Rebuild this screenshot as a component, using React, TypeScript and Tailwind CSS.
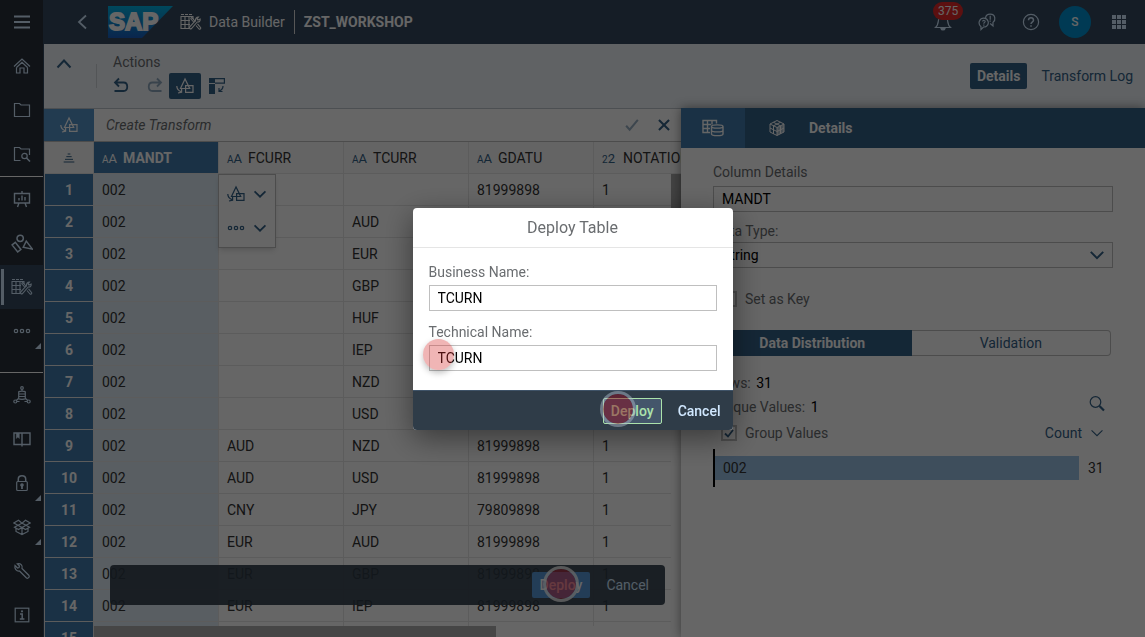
import React from "react";

type IconProps = { className?: string };

function Svg({ className = "", size = 18, children }: { className?: string; size?: number; children: React.ReactNode }) {
  return (
    <svg
      className={`shrink-0 ${className}`}
      width={size}
      height={size}
      viewBox="0 0 18 18"
      fill="none"
      stroke="currentColor"
      strokeWidth={1.2}
      aria-hidden="true"
    >
      {children}
    </svg>
  );
}

const MenuIcon = () => (
  <Svg>
    <path d="M1 3.500h16M1 9h16M1 14.500h16" strokeWidth={2} />
  </Svg>
);
const HomeIcon = () => (
  <Svg>
    <path d="M1 9.500 9 2l8 7.500M3.500 10.500V16h3.500v-5h4v5h3.500v-5.500M3.500 10.500 9 5.300l5.500 5.200" />
  </Svg>
);
const FolderIcon = () => (
  <Svg>
    <path d="M1.500 15.500v-13h5l1.500 1.500h8.500v11.500z" />
  </Svg>
);
const FolderSearchIcon = () => (
  <Svg>
    <path d="M7.500 15.500h-6v-13h5L8 4h8.500v6" />
    <circle cx="11.500" cy="11" r="2.700" />
    <path d="m13.500 13 3.500 3.500" strokeWidth={1.600} />
  </Svg>
);
const PresentationIcon = () => (
  <Svg>
    <path d="M1.500 3.500h15v9.500h-15zM9 1v2.500M6 10.500V8M9 10.500v-5M12 10.500V7M6 13l-1.500 4M12 13l1.500 4" strokeWidth={1.400} />
  </Svg>
);
const ShapesIcon = () => (
  <Svg size={22}>
    <circle cx="7.500" cy="5.200" r="2.600" />
    <path d="M3.500 8.500.9 10.500l4.600 5.800 2.600-2zM12.500 7.500l-2.500 5 7.500 1.500z" />
  </Svg>
);
const TableToolsIcon = ({ className }: IconProps) => (
  <svg className={`shrink-0 ${className ?? ""}`} width="22" height="18" viewBox="0 0 22 18" fill="none" stroke="currentColor" strokeWidth={1.100} aria-hidden="true">
    <path d="M1 1.500h12" strokeDasharray="3 1" />
    <path d="M9.500 15.500H1v-12h12.500M1 7.500h9M1 11.500h9M5 3.500v12M9 3.500v12M13 3.500v2.500" />
    <path d="m10.500 5.500 1.300-1 3.600 4.200M10.500 5.500l3.600 4M16 12.500l3 3.500M17.500 10.800l3.200 3.900c.4 1-1 2-1.700 1.300" />
    <path d="m18.500 4-1.500 2 1 1 2.200-1c.2 2.300-1.200 3.300-3 3l-5.700 6.500c-1.200 1-2.700-.4-1.700-1.600l5.700-6.200C15 5.500 16.500 4 18.500 4z" />
  </svg>
);
const DotsIcon = () => (
  <Svg>
    <circle cx="3" cy="9" r="1.700" />
    <circle cx="9" cy="9" r="1.700" />
    <circle cx="15" cy="9" r="1.700" />
  </Svg>
);
const DataNetworkIcon = () => (
  <Svg>
    <circle cx="9" cy="2" r="1.300" />
    <circle cx="2.300" cy="15.500" r="1.500" />
    <circle cx="15.700" cy="15.500" r="1.500" />
    <path d="M9 3.500V5M5.700 5.800c1-.8 5.600-.8 6.600 0v7c-1 .8-5.600.8-6.600 0zM5.700 8h6.600M5.700 10.500h6.600M5.500 12.500l-2 1.700M12.500 12.500l2 1.700M4 15.500h2.500M11.500 15.500H14" />
  </Svg>
);
const BookIcon = () => (
  <Svg>
    <path d="M1 3h16v11.500H1zM9 3v13.500" strokeWidth={1.400} />
    <path d="M3.300 3v5.500L4.800 7l1.500 1.500V3" fill="currentColor" strokeWidth={0.500} />
  </Svg>
);
const LockIcon = () => (
  <Svg>
    <rect x="3.700" y="7.500" width="10.600" height="9" rx="1" />
    <path d="M5.300 7.500V5c0-4.500 7.400-4.500 7.400 0v2.500" strokeWidth={1.500} />
    <circle cx="9" cy="11" r="1.200" fill="currentColor" />
    <path d="M9 11v4" strokeWidth={1.800} />
  </Svg>
);
const BoxIcon = () => (
  <Svg>
    <path d="M9 5.200 5 7.300 9 9.500l4-2.200zM3 9.500v4l6 3 6-3v-4M9 9.500v7M5 7.300.8 5 5.500 2.200 9 5.200l3.500-3L17.200 5 13 7.300l3.500 2-4 2.200L9 9.500l-3.500 2-4-2.200z" />
  </Svg>
);
const WrenchIcon = () => (
  <Svg>
    <path d="M2 3.500 4.500 6 6 5.500 6.500 4 4.200 1.800C7.500.8 10 3.500 9 6.500l7 7c1 1.500-1 3.500-2.500 2.500l-7-7C3.500 9.500 1.200 6.500 2 3.500z" />
  </Svg>
);
const InfoIcon = () => (
  <Svg>
    <rect x="2.200" y="2.200" width="13.600" height="13.600" />
    <path d="M7 8h2.200v5M6.800 13h4.600" strokeWidth={1.500} />
    <circle cx="9" cy="5.300" r="1.100" fill="currentColor" stroke="none" />
  </Svg>
);
const ChevronLeft = () => (
  <Svg>
    <path d="m13 2.500-7 6.500 7 6.500" strokeWidth={1.800} />
  </Svg>
);
const ChevronUp = () => (
  <Svg>
    <path d="m2.500 12.500 6.500-7 6.500 7" strokeWidth={2} />
  </Svg>
);
const ChevronDown = ({ className, thin = false, size = 14 }: { className?: string; thin?: boolean; size?: number }) => (
  <Svg className={className} size={size}>
    <path d="m2 5.500 7 7 7-7" strokeWidth={thin ? 1.400 : 2.200} />
  </Svg>
);
const UndoIcon = ({ className }: IconProps) => (
  <Svg className={className}>
    <path d="M6 1.500 2 5.500l4 4M2 5.500h8.500c5 0 5 8.500 0 8.500H1.500" strokeWidth={1.800} />
  </Svg>
);
const TransformIcon = ({ className }: IconProps) => (
  <Svg className={className}>
    <path d="M9 2 4.500 11.500h9.200z" />
    <path d="M9.600 8.600h7.400v6.800H9.600z" />
    <path d="M.8 9c0 2.800 1 4.300 4.200 5.600M5.600 11.500v3.700l-3.600.8" />
  </Svg>
);
const PivotIcon = () => (
  <Svg>
    <path d="M1 1h6v5H1zM1 7h6v10H1z" fill="currentColor" stroke="none" />
    <path d="M7 1.600h9.400v4.600H7M15 9c0 2.500-1 4-4 5M11 11v3.500h3.500" />
  </Svg>
);
const BellIcon = () => (
  <Svg>
    <path d="M1.500 14.500h15C14 12.500 14 11 13.500 7c-.5-6-8.500-6-9 0-.5 4-.5 5.500-3 7.500z" />
    <path d="M7 15.500c.5 2 3.500 2 4 0z" fill="currentColor" />
  </Svg>
);
const ChatHelpIcon = () => (
  <Svg>
    <path d="M3 16.500v-2.800C-1 10 2 5 6 5.200s6 5.300 2.500 8c-1.200.9-2 .8-3 .8z" />
    <path d="M7.500 4.800c1-5 8.500-4.600 9.300 0 .4 2.200-.6 3.600-1.800 4.600V13l-2.800-2.500" />
    <path d="M4.500 8.500c.3-1.500 3-1.300 2.600.2-.3 1-1.300.8-1.300 2M5.800 11.500v1.200M12.200 2.800v4M12.200 7.500v1.200" />
  </Svg>
);
const HelpIcon = () => (
  <Svg>
    <circle cx="9" cy="9" r="7.600" />
    <path d="M6.500 7.300c0-3.500 5-3.500 5 0 0 1.800-2.500 2-2.500 3.700M9 12.200v1.600" strokeWidth={1.500} />
  </Svg>
);
const GridIcon = () => (
  <Svg>
    <path d="M2 2h4v4H2zM7 2h4v4H7zM12 2h4v4h-4zM2 7h4v4H2zM7 7h4v4H7zM12 7h4v4h-4zM2 12h4v4H2zM7 12h4v4H7zM12 12h4v4h-4z" fill="currentColor" stroke="none" />
  </Svg>
);
const SortIcon = () => (
  <Svg size={12}>
    <path d="M7 3h4M5 7h8M3 11h12M1 15h16" strokeWidth={1.500} />
  </Svg>
);
const CheckIcon = () => (
  <Svg size={14}>
    <path d="m1.500 10 4.500 5L16.500 2.500" strokeWidth={2.600} />
  </Svg>
);
const CloseIcon = () => (
  <Svg size={14}>
    <path d="m2.500 2.500 13 13M15.500 2.500l-13 13" strokeWidth={2.600} />
  </Svg>
);
const TableDataIcon = () => (
  <svg width="22" height="18" viewBox="0 0 22 18" fill="none" stroke="currentColor" strokeWidth={1.400} aria-hidden="true">
    <path d="M8 13.500H1v-12h13.500v3M1 5.500h8M1 9.500h7M5.500 1.500v12M10 1.500v4" />
    <path d="M9.500 7.500c0-2.200 11.500-2.200 11.500 0v7.500c0 2.200-11.500 2.200-11.500 0zM9.500 7.500c0 2.200 11.500 2.200 11.500 0M9.500 11.200c0 2.200 11.500 2.200 11.500 0" />
  </svg>
);
const CubeIcon = () => (
  <Svg>
    <path d="M9 1.500 2 5v8l7 3.500 7-3.500V5zM2 5l7 3.500L16 5M9 8.500v8M5.500 3.300l7 3.500v8.200M12.500 3.300l-7 3.500v8.200M2 9l7 3.500L16 9" strokeWidth={1} />
    <path d="m9 8.500 7-3.500v8l-7 3.500z" fill="currentColor" fillOpacity={0.600} stroke="none" />
  </Svg>
);
const SearchIcon = () => (
  <Svg>
    <circle cx="7.500" cy="7" r="5.300" />
    <path d="m11.500 11 4.500 4.500" strokeWidth={2.200} />
  </Svg>
);

function SapLogo() {
  return (
    <svg width="65" height="32" viewBox="0 0 65 32" role="img" aria-label="SAP" className="shrink-0">
      <defs>
        <linearGradient id="sap" x1="0" y1="0" x2="0" y2="1">
          <stop offset="0" stopColor="#00b4e6" />
          <stop offset="1" stopColor="#1a5fc0" />
        </linearGradient>
      </defs>
      <path d="M0 0h65L34 32H0z" fill="url(#sap)" />
      <text x="1" y="24" fontFamily="Liberation Sans, Arial, sans-serif" fontWeight="700" fontSize="24" fill="#fff" stroke="#fff" strokeWidth="1.800">
        SAP
      </text>
    </svg>
  );
}

type NavItem = { label: string; icon: React.ReactNode; selected?: boolean; more?: boolean };

const topNav: NavItem[] = [
  { label: "Home", icon: <HomeIcon /> },
  { label: "Files", icon: <FolderIcon /> },
  { label: "Catalog", icon: <FolderSearchIcon /> },
];
const middleNav: NavItem[] = [
  { label: "Stories", icon: <PresentationIcon /> },
  { label: "Business Builder", icon: <ShapesIcon /> },
  { label: "Data Builder", icon: <TableToolsIcon />, selected: true },
  { label: "More", icon: <DotsIcon />, more: true },
];
const bottomNav: NavItem[] = [
  { label: "Connections", icon: <DataNetworkIcon /> },
  { label: "Library", icon: <BookIcon /> },
  { label: "Security", icon: <LockIcon />, more: true },
  { label: "Transport", icon: <BoxIcon />, more: true },
  { label: "System", icon: <WrenchIcon /> },
  { label: "About", icon: <InfoIcon /> },
];

function NavGroup({ items }: { items: NavItem[] }) {
  return (
    <>
      {items.map((item) => (
        <button
          key={item.label}
          aria-label={item.label}
          className={`relative flex h-11 w-full shrink-0 items-center justify-center ${item.selected ? "bg-[#354a5f]" : ""}`}
        >
          {item.selected && <span className="absolute inset-y-1 left-px w-[3px] bg-[#d1e8ff]" />}
          {item.icon}
          {item.more && (
            <svg className="absolute right-0.5 bottom-1" width="6" height="6" aria-hidden="true">
              <path d="M6 0v6H0z" fill="currentColor" />
            </svg>
          )}
        </button>
      ))}
    </>
  );
}

const columns = [
  { name: "MANDT", type: "A" },
  { name: "FCURR", type: "A" },
  { name: "TCURR", type: "A" },
  { name: "GDATU", type: "A" },
  { name: "NOTATION", type: "2" },
];

const rows: string[][] = [
  ["002", "", "", "81999898", "1"],
  ["002", "", "AUD", "81999898", "1"],
  ["002", "", "EUR", "81999898", "1"],
  ["002", "", "GBP", "81999898", "1"],
  ["002", "", "HUF", "81999898", "1"],
  ["002", "", "IEP", "81999898", "1"],
  ["002", "", "NZD", "81999898", "1"],
  ["002", "", "USD", "81999898", "1"],
  ["002", "AUD", "NZD", "81999898", "1"],
  ["002", "AUD", "USD", "81999898", "1"],
  ["002", "CNY", "JPY", "79809898", "1"],
  ["002", "EUR", "AUD", "81999898", "1"],
  ["002", "EUR", "GBP", "81999898", "1"],
  ["002", "EUR", "IEP", "81999898", "1"],
  ["", "", "", "", ""],
];

function TypeGlyph({ type }: { type: string }) {
  return (
    <span className="leading-none" aria-hidden="true">
      <span className="text-[10px]">{type}</span>
      <span className="text-[13px]">{type}</span>
    </span>
  );
}

function DataGrid() {
  return (
    <table className="w-[675px] table-fixed border-separate border-spacing-0 text-left text-sm text-[#333]">
      <colgroup>
        <col className="w-[50px]" />
        {columns.map((c) => (
          <col key={c.name} className="w-[125px]" />
        ))}
      </colgroup>
      <thead>
        <tr className="h-8">
          <th className="border border-t-0 border-[#e5e5e5] bg-[#fafafa] p-0 text-[#346187]">
            <span className="flex justify-center">
              <SortIcon />
            </span>
          </th>
          {columns.map((c, i) => (
            <th
              key={c.name}
              scope="col"
              className={`border-r border-b border-[#e5e5e5] p-0 px-2 ${i === 0 ? "bg-[#427cac] font-bold text-white" : "bg-[#fafafa] font-normal"}`}
            >
              <span className="flex items-center whitespace-nowrap">
                <span className={`w-[21px] shrink-0 ${i === 0 ? "font-normal" : "text-[#346187]"}`}>
                  <TypeGlyph type={c.type} />
                </span>
                <span>{c.name}</span>
              </span>
            </th>
          ))}
        </tr>
      </thead>
      <tbody>
        {rows.map((row, r) => (
          <tr key={r} className="h-8">
            <th scope="row" className="border-x border-b border-[#e5e5e5] bg-[#427cac] p-0 text-center font-bold text-white">
              {r + 1}
            </th>
            {row.map((cell, c) => (
              <td key={c} className={`border-r border-b border-[#e5e5e5] p-0 px-2 ${c === 0 ? "bg-[#deebf5]" : "bg-white"}`}>
                {cell}
              </td>
            ))}
          </tr>
        ))}
      </tbody>
    </table>
  );
}

type TapTone = "soft" | "dialog" | "toolbar";

const tapTones: Record<TapTone, string> = {
  soft: "size-[31px] bg-[#d42a2a]/35 shadow-[0_3px_6px_rgba(0,0,0,0.25)]",
  dialog: "size-9 border-3 border-[#a9b6c6]/50 bg-[#8c0a1e]/50",
  toolbar: "size-9 border-3 border-white/80 bg-[#ff1f3c]/50",
};

function TapMarker({ tone, className }: { tone: TapTone; className: string }) {
  return <span aria-hidden="true" className={`pointer-events-none absolute rounded-full bg-clip-padding ${tapTones[tone]} ${className}`} />;
}

function Workspace() {
  return (
    <section className="relative flex min-w-0 flex-1 flex-col overflow-hidden border-t border-[#bfc6cd] bg-white">
      <div className="flex h-[33px] shrink-0 border-b border-[#bfbfbf]">
        <div className="flex w-[50px] items-center justify-center bg-[#5593c9] text-white">
          <TransformIcon />
        </div>
        <input
          aria-label="Create Transform"
          placeholder="Create Transform"
          className="min-w-0 flex-1 px-3 text-sm italic outline-none placeholder:text-[#6a6d70]"
        />
        <div className="flex items-center gap-[18px] pr-[10px] text-[#346187]">
          <button aria-label="Apply" className="opacity-50">
            <CheckIcon />
          </button>
          <button aria-label="Discard">
            <CloseIcon />
          </button>
        </div>
      </div>
      <div className="relative min-h-0 flex-1 overflow-hidden">
        <DataGrid />
        <div className="absolute top-8 right-0 bottom-0 w-2.5 bg-white">
          <div className="h-60 bg-[#a6a6a6]" />
        </div>
        <div className="absolute right-0 bottom-0 left-[50px] h-[11px] bg-white">
          <div className="h-full w-[402px] bg-[#b0b0b0]" />
        </div>
        <div className="absolute top-8 left-[174px] flex w-[58px] flex-col gap-4 border border-[#bfbfbf] bg-white px-2 py-2.5 text-[#346187] shadow-md">
          <button aria-label="Transform column" className="flex h-[18px] items-center justify-between">
            <TransformIcon />
            <ChevronDown />
          </button>
          <button aria-label="More actions" className="flex h-[18px] items-center justify-between">
            <DotsIcon />
            <ChevronDown />
          </button>
        </div>
        <div className="absolute right-4 bottom-8 left-[66px] flex h-10 items-center justify-end gap-4 rounded bg-[#2f3c48]/90 pr-4 text-sm text-white">
          <div className="relative">
            <button className="h-[26px] rounded-xs bg-[#5899da] px-2 font-medium">Deploy</button>
            <TapMarker tone="toolbar" className="top-[-6px] left-[11px]" />
          </div>
          <button className="text-[#d1e8ff]">Cancel</button>
        </div>
      </div>
    </section>
  );
}

function CheckBox({ label, checked }: { label: string; checked?: boolean }) {
  return (
    <label className="flex items-center gap-2">
      <span className="relative flex size-4">
        <input type="checkbox" defaultChecked={checked} className="peer size-4 appearance-none border-2 border-[#bfbfbf] bg-white" />
        <svg className="pointer-events-none absolute inset-0 hidden text-[#346187] peer-checked:block" width="16" height="16" viewBox="0 0 16 16" aria-hidden="true">
          <path d="m4 8.500 3 3L12 5" fill="none" stroke="currentColor" strokeWidth="1.800" />
        </svg>
      </span>
      {label}
    </label>
  );
}

function DetailsPanel() {
  return (
    <aside className="relative z-10 flex w-[464px] shrink-0 flex-col bg-white text-sm text-[#6a6d70] shadow-[0_0_10px_rgba(0,0,0,0.45)]">
      <div className="flex h-10 shrink-0 bg-[#346187] text-white">
        <button aria-label="Column" className="flex w-16 items-center justify-center bg-[#427cac]">
          <TableDataIcon />
        </button>
        <button aria-label="Table" className="flex w-16 items-center justify-center">
          <CubeIcon />
        </button>
        <h2 className="self-center font-bold">Details</h2>
      </div>
      <div className="flex flex-col px-8 pt-[15px]">
        <label htmlFor="column" className="leading-[18px]">
          Column Details
        </label>
        <input id="column" defaultValue="MANDT" className="mt-[5px] h-[26px] w-full border border-[#bfbfbf] px-2 text-black" />
        <label htmlFor="dtype" className="mt-2.5 leading-[18px]">
          Data Type:
        </label>
        <div className="relative mt-0.5">
          <select id="dtype" className="h-[26px] w-full appearance-none border border-[#bfbfbf] bg-white px-2 text-black">
            <option>String</option>
          </select>
          <ChevronDown size={16} className="pointer-events-none absolute top-[5px] right-2 text-[#346187]" />
        </div>
        <div className="mt-[21px] pl-2">
          <CheckBox label="Set as Key" />
        </div>
        <div className="mt-[21px] mr-0.5 flex h-[26px]">
          <button className="flex-1 rounded-l-xs bg-[#346187] font-bold text-white">Data Distribution</button>
          <button className="flex-1 rounded-r border border-l-0 border-[#bfbfbf] text-[#346187]">Validation</button>
        </div>
        <div className="flex items-end justify-between pt-[15px] pr-[7px]">
          <div className="leading-6">
            <p>
              Rows: <span className="pl-0.5 text-black">31</span>
            </p>
            <p>
              Unique Values: <span className="pl-0.5 text-black">1</span>
            </p>
          </div>
          <button aria-label="Search values" className="pb-1.5 text-[#346187]">
            <SearchIcon />
          </button>
        </div>
        <div className="mt-1 flex items-center justify-between pr-[9px] pl-2">
          <CheckBox label="Group Values" checked />
          <button className="flex items-center gap-2 text-[#346187]">
            Count
            <ChevronDown thin />
          </button>
        </div>
        <div className="mt-1.5 flex items-center text-[#333]">
          <span className="h-[38px] w-0.5 bg-black" />
          <span className="flex h-6 flex-1 items-center bg-[#9cc3e7] px-2">002</span>
          <span className="w-[34px] pl-[9px]">31</span>
        </div>
      </div>
    </aside>
  );
}

function DeployDialog() {
  return (
    <div className="fixed inset-0 z-50 flex items-center justify-center bg-black/60">
      <div role="dialog" aria-labelledby="dialog-title" className="w-80 rounded bg-white text-sm text-[#6a6d70] shadow-[0_8px_30px_rgba(0,0,0,0.45)]">
        <h2 id="dialog-title" className="border-b border-[#e5e5e5] text-center text-base leading-[39px]">
          Deploy Table
        </h2>
        <div className="flex flex-col px-4 pt-[15px] pb-[19px]">
          <label htmlFor="business" className="leading-[18px]">
            Business Name:
          </label>
          <input id="business" defaultValue="TCURN" className="mt-1 h-[26px] border border-[#bfbfbf] px-2 text-black" />
          <label htmlFor="technical" className="mt-3 leading-[18px]">
            Technical Name:
          </label>
          <div className="relative mt-1 flex">
            <input id="technical" defaultValue="TCURN" className="h-[26px] w-full border border-[#bfbfbf] px-2 text-black" />
            <TapMarker tone="soft" className="top-[-6px] left-[-6px]" />
          </div>
        </div>
        <div className="flex h-10 items-center justify-end gap-4 rounded-b border-t border-[#3f5368] bg-[#2f3c48] pt-0.5 pr-3 [text-shadow:0_0_2px_#000]">
          <div className="relative">
            <button className="h-[26px] rounded-xs border border-[#abe2ab] bg-[#44566b] px-[7px] font-medium text-[#abe2ab]">Deploy</button>
            <TapMarker tone="dialog" className="top-[-7px] left-[-3px]" />
          </div>
          <button className="font-medium text-[#d1e8ff]">Cancel</button>
        </div>
      </div>
    </div>
  );
}

export default function App() {
  return (
    <div className="flex h-screen overflow-hidden bg-white font-[Roboto,sans-serif]">
      <nav aria-label="Main" className="flex w-11 shrink-0 flex-col border-r border-[#354a5f] bg-[#29313a] text-[#d1e8ff]">
        <button aria-label="Toggle menu" className="flex h-11 shrink-0 items-center justify-center">
          <MenuIcon />
        </button>
        <NavGroup items={topNav} />
        <div className="h-px shrink-0 bg-white" />
        <NavGroup items={middleNav} />
        <div className="mt-[19px] h-px shrink-0 bg-white" />
        <NavGroup items={bottomNav} />
      </nav>
      <div className="flex min-w-0 flex-1 flex-col">
        <header className="flex h-11 shrink-0 items-center justify-between bg-[#354a5f] pr-[17px] pl-[29px] text-sm text-white">
          <div className="flex items-center">
            <button aria-label="Back" className="text-[#d1e8ff]">
              <ChevronLeft />
            </button>
            <div className="pl-[17px]">
              <SapLogo />
            </div>
            <TableToolsIcon className="ml-[7px]" />
            <span className="pl-[7px]">Data Builder</span>
            <span className="mx-[9px] h-6 w-px bg-[#d9d9d9]" />
            <h1 className="font-bold">ZST_WORKSHOP</h1>
          </div>
          <div className="flex items-center text-[#d1e8ff]">
            <button aria-label="Notifications, 375 unread" className="relative mr-[26px]">
              <BellIcon />
              <span className="absolute top-[-11px] -left-px rounded-full bg-[#e52929] px-[5px] text-xs leading-[18px] text-white">375</span>
            </button>
            <button aria-label="Feedback" className="mr-[26px]">
              <ChatHelpIcon />
            </button>
            <button aria-label="Help" className="mr-[19px]">
              <HelpIcon />
            </button>
            <button aria-label="User profile" className="mr-[19px] size-8 rounded-full bg-[#0092d1] text-xs font-medium text-white">
              S
            </button>
            <button aria-label="Products">
              <GridIcon />
            </button>
          </div>
        </header>
        <div className="flex h-16 shrink-0 items-start justify-between bg-[#eff4f9] pr-3 pl-[11px] text-sm text-[#346187]">
          <div className="flex">
            <button aria-label="Collapse toolbar" className="mt-[11px] self-start">
              <ChevronUp />
            </button>
            <span className="mt-5 ml-[23px] h-6 w-px bg-[#cfd5da]" />
            <div className="pt-[9px] pl-4">
              <p className="leading-[18px] text-[#6a6d70]">Actions</p>
              <div className="flex items-center pt-[2px]">
                <button aria-label="Undo">
                  <UndoIcon />
                </button>
                <button aria-label="Redo" className="ml-3.5 opacity-50">
                  <UndoIcon className="-scale-x-100" />
                </button>
                <button aria-label="Transform" className="ml-1.5 flex h-[26px] w-8 items-center justify-center rounded-xs bg-[#346187] text-white">
                  <TransformIcon />
                </button>
                <button aria-label="Pivot" className="ml-[7px]">
                  <PivotIcon />
                </button>
              </div>
            </div>
          </div>
          <div className="flex items-center gap-3.5 pt-[19px]">
            <button className="h-[26px] rounded-xs bg-[#346187] px-[7px] font-bold text-white">Details</button>
            <button>Transform Log</button>
          </div>
        </div>
        <div className="flex min-h-0 flex-1">
          <Workspace />
          <DetailsPanel />
        </div>
      </div>
      <DeployDialog />
    </div>
  );
}
